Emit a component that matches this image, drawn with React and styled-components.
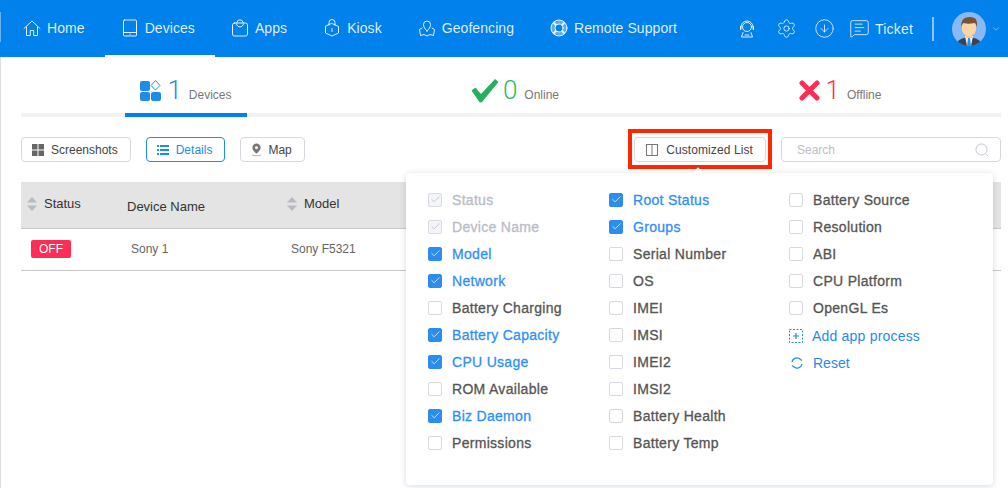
// App.jsx
import React from "react";
import styled, { createGlobalStyle } from "styled-components";
import { Check, ChevronDown, CircleArrowDown, MessageSquareText, Settings } from "lucide-react";

const GlobalStyle = createGlobalStyle`
  html, body {
    margin: 0;
    padding: 0;
    background: #fff;
    overflow: hidden;
  }
  * {
    box-sizing: border-box;
  }
  body {
    font-family: "Liberation Sans", Arial, sans-serif;
  }
`;

const Header = styled.header`
  display: flex;
  align-items: stretch;
  height: 57px;
  padding: 0 7px;
  background: #0081eb;
  color: rgba(255, 255, 255, 0.88);
  font-size: 14px;
  letter-spacing: 0.07px;
  position: relative;
  &::before {
    content: "";
    position: absolute;
    left: 0;
    top: 12px;
    width: 1px;
    height: 30px;
    background: rgba(255, 255, 255, 0.4);
  }
`;

const NavItem = styled.a`
  display: flex;
  align-items: center;
  gap: 6px;
  padding: 0 20px 0 16px;
  border-bottom: 2px solid ${(p) => (p.$active ? "#fff" : "transparent")};
`;

const HeaderRight = styled.div`
  display: flex;
  align-items: center;
  margin-left: auto;
`;

const HeaderIcon = styled.span`
  display: flex;
  margin-right: ${(p) => p.$gap}px;
`;

const TicketLabel = styled.span`
  display: flex;
  align-items: center;
  gap: 5px;
  letter-spacing: 0.2px;
`;

const Divider = styled.span`
  width: 2px;
  height: 24px;
  margin: 0 18px 0 19px;
  background: rgba(255, 255, 255, 0.55);
`;

const AvatarWrap = styled.span`
  display: flex;
  align-items: center;
  gap: 5px;
`;

const Content = styled.main`
  height: 431px;
  padding: 0 7px 0 20px;
  border-left: 1px solid #ddd;
`;

const Stats = styled.div`
  display: grid;
  grid-template-columns: 330px 328px 1fr;
  height: 60px;
  border-bottom: 4px solid #f2f2f2;
`;

const StatCell = styled.div`
  display: flex;
  justify-content: center;
`;

const Stat = styled.div`
  display: flex;
  align-items: center;
  height: 60px;
  padding: 10px 15px 0;
  border-bottom: 4px solid ${(p) => (p.$active ? "#0081eb" : "transparent")};
`;

const StatNumber = styled.span`
  font-family: Roboto, "Liberation Sans", sans-serif;
  font-weight: 300;
  font-size: 26px;
  line-height: 26px;
  margin: 0 7px 0 ${(p) => p.$gap}px;
  color: ${(p) => p.$color};
`;

const StatLabel = styled.span`
  font-size: 12px;
  color: #777;
  padding-top: 9px;
`;

const Toolbar = styled.div`
  display: flex;
  align-items: center;
  gap: 15px;
  margin-top: 20px;
`;

const ToolButton = styled.button`
  display: flex;
  align-items: center;
  gap: ${(p) => p.$gap || 7}px;
  height: 25px;
  padding: 0 12px 0 10px;
  border: 1px solid ${(p) => (p.$active ? "#1f8ceb" : "#d5d8de")};
  border-radius: 4px;
  background: #fff;
  color: ${(p) => (p.$active ? "#1f8ceb" : "#444")};
  font-family: inherit;
  font-size: 12px;
  letter-spacing: ${(p) => p.$spacing || 0}px;
`;

const RightTools = styled.div`
  display: flex;
  align-items: center;
  gap: 15px;
  margin-left: auto;
  position: relative;
`;

const HighlightWrap = styled.div`
  position: relative;
  &::after {
    content: "";
    position: absolute;
    inset: -8px -6px -7px -6px;
    border: 4px solid #ff2600;
    pointer-events: none;
  }
`;

const SearchBox = styled.div`
  display: flex;
  align-items: center;
  justify-content: space-between;
  width: 220px;
  height: 25px;
  padding: 0 11px 0 15px;
  border: 1px solid #d5d8de;
  border-radius: 4px;
  color: #bbbec4;
  font-size: 12px;
`;

const Popover = styled.div`
  position: absolute;
  right: 8px;
  top: 36px;
  z-index: 5;
  width: 587px;
  height: 312px;
  padding: 13px 0 0 22px;
  display: grid;
  grid-template-columns: 181px 180px 1fr;
  background: #fff;
  border-radius: 4px;
  box-shadow: 0 1px 6px rgba(60, 70, 110, 0.2);
  &::before {
    content: "";
    position: absolute;
    top: -4px;
    left: 288px;
    width: 8px;
    height: 8px;
    background: #fff;
    transform: rotate(45deg);
    box-shadow: -1px -1px 2px rgba(60, 70, 110, 0.08);
  }
`;

const OptionColumn = styled.div`
  display: flex;
  flex-direction: column;
`;

const Option = styled.label`
  display: flex;
  align-items: center;
  gap: 10px;
  height: 27px;
  font-size: 14px;
  letter-spacing: 0.3px;
  -webkit-text-stroke: 0.3px currentColor;
  color: ${(p) => (p.$disabled ? "#b9bcc6" : p.$checked ? "#2f8ffa" : "#555")};
`;

const Box = styled.span`
  display: flex;
  align-items: center;
  justify-content: center;
  width: 14px;
  height: 14px;
  border-radius: 2px;
  border: 1px solid ${(p) => (p.$disabled ? "#d8dbe2" : p.$checked ? "#2d8cf0" : "#d8dae2")};
  background: ${(p) => (p.$disabled ? "#f4f5f8" : p.$checked ? "#2d8cf0" : "#fff")};
  color: ${(p) => (p.$disabled ? "#b4b8c2" : "#fff")};
  flex: none;
`;

const LinkRow = styled.a`
  display: flex;
  align-items: center;
  gap: ${(p) => p.$gap}px;
  height: 27px;
  padding-left: ${(p) => p.$inset || 0}px;
  font-size: 14px;
  letter-spacing: ${(p) => p.$spacing || 0}px;
  color: #1f8ceb;
  &:first-of-type {
    margin-top: 1px;
  }
`;

const Table = styled.div`
  margin-top: 20px;
`;

const TableHead = styled.div`
  display: grid;
  grid-template-columns: 106px 160px 1fr;
  height: 47px;
  background: #e4e4e4;
  border-bottom: 1px solid #c8c8c8;
  font-size: 13px;
  color: #333;
`;

const HeadCell = styled.div`
  display: flex;
  align-items: center;
  gap: 7px;
  padding-left: ${(p) => p.$pad || 0}px;
  padding-bottom: ${(p) => (p.$low ? 0 : 3)}px;
  padding-top: ${(p) => (p.$low ? 2 : 0)}px;
`;

const TableRow = styled.div`
  display: grid;
  grid-template-columns: 106px 160px 1fr;
  align-items: center;
  height: 42px;
  padding-bottom: 2px;
  border-bottom: 1px solid #c8c8c8;
  font-size: 12px;
  color: #666;
`;

const RowCell = styled.div`
  padding-left: ${(p) => p.$pad}px;
`;

const OffBadge = styled.span`
  display: block;
  width: 40px;
  height: 18px;
  line-height: 18px;
  text-align: center;
  border-radius: 2px;
  background: #ff2d55;
  color: #fff;
  font-size: 12px;
`;

const Line = ({ children, size = 18, sw = 1 }) => (
  <svg width={size} height={size} viewBox="0 0 18 18" fill="none" stroke="currentColor" strokeWidth={sw} strokeLinecap="round" strokeLinejoin="round">
    {children}
  </svg>
);

const SortIcon = () => (
  <svg width="10" height="14" viewBox="0 0 10 14" fill="#b6bac2">
    <path d="M5 0l5 5.5H0zM0 8.5h10L5 14z" />
  </svg>
);

const AvatarIcon = () => (
  <svg width="34" height="34" viewBox="0 0 34 34">
    <defs>
      <clipPath id="avatarClip">
        <circle cx="17" cy="17" r="17" />
      </clipPath>
    </defs>
    <circle cx="17" cy="17" r="17" fill="#87b9f6" />
    <g clipPath="url(#avatarClip)">
      <path d="M4 34c1-6 5-8 13-9 8 1 12 3 13 9z" fill="#3a4350" />
      <path d="M13 24h8l-2 10h-4z" fill="#f4f7fb" />
      <path d="M16 26h2l1 8h-4z" fill="#2f8fdc" />
      <rect x="14" y="19" width="6" height="7" fill="#f4c98f" />
      <path d="M10 11h14v6c0 4-3 7-7 7s-7-3-7-7z" fill="#fbd6a5" />
      <path d="M9.500 15c-1-6 2-10 8-10 3 0 7 1 7 4 1 2 .5 4 0 6-.5-2-1-4-2-4-4 1-8 1-11 0-1 1-1.500 2-2 4z" fill="#7a5238" />
    </g>
  </svg>
);

const leftOptions = [
  ["Status", true, true],
  ["Device Name", true, true],
  ["Model", true],
  ["Network", true],
  ["Battery Charging"],
  ["Battery Capacity", true],
  ["CPU Usage", true],
  ["ROM Available"],
  ["Biz Daemon", true],
  ["Permissions"],
];

const midOptions = [
  ["Root Status", true],
  ["Groups", true],
  ["Serial Number"],
  ["OS"],
  ["IMEI"],
  ["IMSI"],
  ["IMEI2"],
  ["IMSI2"],
  ["Battery Health"],
  ["Battery Temp"],
];

const rightOptions = [["Battery Source"], ["Resolution"], ["ABI"], ["CPU Platform"], ["OpenGL Es"]];

const renderOption = ([label, checked, disabled]) => (
  <Option key={label} $checked={checked} $disabled={disabled}>
    <Box $checked={checked} $disabled={disabled}>
      {checked && <Check size={11} strokeWidth={1.6} />}
    </Box>
    {label}
  </Option>
);

export default function App() {
  return (
    <>
      <GlobalStyle />
      <Header>
        <NavItem>
          <Line>
            <path d="M1 9.500 9 2l8 7.500M3.500 8v8.500h3.800V11.500h3.400v5h3.800V8" />
          </Line>
          Home
        </NavItem>
        <NavItem $active>
          <Line>
            <rect x="2.500" y="1" width="13" height="16" rx="1" />
            <path d="M2.500 13.500h13M9 15v.5" />
          </Line>
          Devices
        </NavItem>
        <NavItem>
          <Line>
            <rect x="1.500" y="4" width="15" height="13" rx="2" />
            <path d="M5.500 4l2-3h3l2 3M5.500 5c.5 4 6.500 4 7 0" />
          </Line>
          Apps
        </NavItem>
        <NavItem>
          <Line>
            <path d="M9 4.500l6.500 3v6.500L9 17l-6.500-3V7.500z" />
            <path d="M6 6V3.500a3 3 0 0 1 6 0V6M9 9.500v3" />
          </Line>
          Kiosk
        </NavItem>
        <NavItem>
          <Line>
            <path d="M9 12C7 10 5.500 8 5.500 5.500a3.500 3.500 0 0 1 7 0C12.500 8 11 10 9 12z" />
            <path d="M4 9l-2.500 1.500L2.500 16.500l3.500-1 3 1.500 3-1.500 3.500 1 1-6L14 9" />
          </Line>
          Geofencing
        </NavItem>
        <NavItem>
          <Line>
            <circle cx="9" cy="9" r="6" strokeWidth="4" strokeOpacity="0.4" />
            <circle cx="9" cy="9" r="8" />
            <circle cx="9" cy="9" r="4" />
            <path d="M3.400 3.400l2.800 2.800M14.600 3.400l-2.800 2.800M3.400 14.600l2.800-2.800M14.600 14.600l-2.800-2.800" strokeWidth="2" strokeLinecap="butt" />
          </Line>
          Remote Support
        </NavItem>
        <HeaderRight>
          <HeaderIcon $gap={20}>
            <Line>
              <circle cx="9" cy="7" r="4.500" />
              <path d="M3 9V7a6 6 0 0 1 12 0v2M2.500 6.500v3M15.500 6.500v3M5 12.500 3.500 17h11L13 12.500M7 15h4" />
            </Line>
          </HeaderIcon>
          <HeaderIcon $gap={17}>
            <Settings size={21} strokeWidth={1} />
          </HeaderIcon>
          <HeaderIcon $gap={14}>
            <CircleArrowDown size={21} strokeWidth={1} />
          </HeaderIcon>
          <TicketLabel>
            <MessageSquareText size={21} strokeWidth={1} />
            Ticket
          </TicketLabel>
          <Divider />
          <AvatarWrap>
            <AvatarIcon />
            <ChevronDown size={10} strokeWidth={1.2} />
          </AvatarWrap>
        </HeaderRight>
      </Header>
      <Content>
        <Stats>
          <StatCell>
            <Stat $active>
              <svg width="21" height="22" viewBox="0 0 21 22" fill="#1f8ceb">
                <rect x="0" y="2" width="10" height="10" rx="2" />
                <rect x="0" y="13" width="10" height="9" rx="2" />
                <rect x="11" y="13" width="10" height="9" rx="2" />
                <path d="M15.500 1.500l4.500 5-4.500 4.500-4.500-4.500z" fill="none" stroke="#1f8ceb" />
              </svg>
              <StatNumber $color="#1f8ceb" $gap={6}>1</StatNumber>
              <StatLabel>Devices</StatLabel>
            </Stat>
          </StatCell>
          <StatCell>
            <Stat>
              <svg width="28" height="25" viewBox="0 0 28 25" fill="#27ae60">
                <path d="M.500 12.500l4-3 5.500 6.500L24 1l3.500 3-16 19.500c-1 1.200-2.500 1.200-3.500 0z" />
              </svg>
              <StatNumber $color="#2dbb5d" $gap={4}>0</StatNumber>
              <StatLabel>Online</StatLabel>
            </Stat>
          </StatCell>
          <StatCell>
            <Stat>
              <svg width="21" height="21" viewBox="0 0 21 21" fill="none" stroke="#ff2d55" strokeWidth="5" strokeLinecap="round">
                <path d="M3 3l15 15M18 3 3 18" />
              </svg>
              <StatNumber $color="#ff2d55" $gap={6}>1</StatNumber>
              <StatLabel>Offline</StatLabel>
            </Stat>
          </StatCell>
        </Stats>
        <Toolbar>
          <ToolButton>
            <svg width="12" height="12" viewBox="0 0 12 12" fill="#666">
              <path d="M0 0h5.500v5.500H0zM6.500 0H12v5.500H6.500zM0 6.500h5.500V12H0zM6.500 6.500H12V12H6.500z" />
            </svg>
            Screenshots
          </ToolButton>
          <ToolButton $active>
            <svg width="12" height="12" viewBox="0 0 12 12" fill="#1f8ceb">
              <path d="M0 1h2v2H0zM3 1h9v2H3zM0 5h2v2H0zM3 5h9v2H3zM0 9h2v2H0zM3 9h9v2H3z" />
            </svg>
            Details
          </ToolButton>
          <ToolButton $gap={6}>
            <svg width="11" height="14" viewBox="0 0 12 14">
              <path d="M6 0a4.500 4.500 0 0 1 4.500 4.500C10.500 7.500 6 11 6 11S1.500 7.500 1.500 4.500A4.500 4.500 0 0 1 6 0z" fill="#777" />
              <circle cx="6" cy="4.500" r="1.600" fill="#fff" />
              <path d="M1 12.500c2 1 8 1 10 0" fill="none" stroke="#aaa" />
            </svg>
            Map
          </ToolButton>
          <RightTools>
            <HighlightWrap>
              <ToolButton $spacing={0.1}>
                <svg width="14" height="12" viewBox="0 0 14 12" fill="none" stroke="#777">
                  <rect x="1.500" y=".5" width="11" height="11" />
                  <path d="M7 .5v11" />
                </svg>
                Customized List
              </ToolButton>
            </HighlightWrap>
            <SearchBox>
              Search
              <svg width="14" height="14" viewBox="0 0 14 14" fill="none" stroke="#c5c8ce">
                <circle cx="6.500" cy="6.500" r="5.500" />
                <path d="M10.500 10.500 13 13" />
              </svg>
            </SearchBox>
            <Popover>
              <OptionColumn>{leftOptions.map(renderOption)}</OptionColumn>
              <OptionColumn>{midOptions.map(renderOption)}</OptionColumn>
              <OptionColumn>
                {rightOptions.map(renderOption)}
                <LinkRow $gap={9} $spacing={0.2}>
                  <svg width="14" height="14" viewBox="0 0 14 14" fill="none" stroke="#1f8ceb">
                    <rect x=".5" y=".5" width="13" height="13" strokeDasharray="2 1.500" />
                    <path d="M4 7h6M7 4v6" strokeWidth="1.200" />
                  </svg>
                  Add app process
                </LinkRow>
                <LinkRow $gap={10} $inset={2}>
                  <svg width="12" height="12" viewBox="0 0 12 12" fill="none" stroke="#1f8ceb" strokeWidth="1.200">
                    <path d="M1 5a5 5 0 0 1 8.500-2.500L11 3.500M11 7a5 5 0 0 1-8.500 2.500L1 8.500" />
                  </svg>
                  Reset
                </LinkRow>
              </OptionColumn>
            </Popover>
          </RightTools>
        </Toolbar>
        <Table>
          <TableHead>
            <HeadCell $pad={6}>
              <SortIcon />
              Status
            </HeadCell>
            <HeadCell $low>Device Name</HeadCell>
            <HeadCell>
              <SortIcon />
              Model
            </HeadCell>
          </TableHead>
          <TableRow>
            <RowCell $pad={10}>
              <OffBadge>OFF</OffBadge>
            </RowCell>
            <RowCell $pad={4}>Sony 1</RowCell>
            <RowCell $pad={4}>Sony F5321</RowCell>
          </TableRow>
        </Table>
      </Content>
    </>
  );
}
